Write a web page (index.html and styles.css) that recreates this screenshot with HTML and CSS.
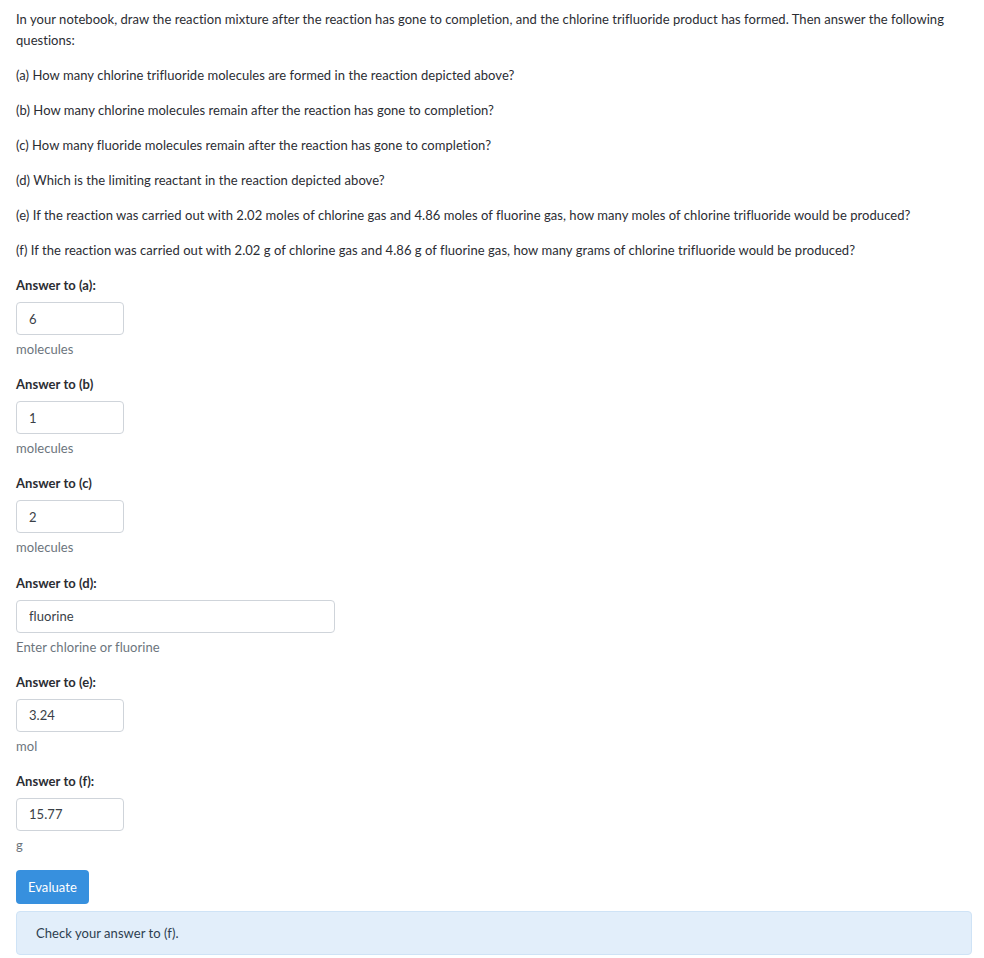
FILE: index.html
```html
<!DOCTYPE html>
<html lang="en">

<head>
    <meta charset="utf-8">
    <title>Limiting Reactant</title>
    <link rel="stylesheet" href="styles.css">
</head>

<body>
    <div class="problem">
        <p>In your notebook, draw the reaction mixture after the reaction has gone to completion, and the chlorine
            trifluoride product has formed. Then answer the following questions:</p>
        <p>(a) How many chlorine trifluoride molecules are formed in the reaction depicted above?</p>
        <p>(b) How many chlorine molecules remain after the reaction has gone to completion?</p>
        <p>(c) How many fluoride molecules remain after the reaction has gone to completion?</p>
        <p>(d) Which is the limiting reactant in the reaction depicted above?</p>
        <p>(e) If the reaction was carried out with 2.02 moles of chlorine gas and 4.86 moles of fluorine gas, how many
            moles of chlorine trifluoride would be produced?</p>
        <p>(f) If the reaction was carried out with 2.02 g of chlorine gas and 4.86 g of fluorine gas, how many grams of
            chlorine trifluoride would be produced?</p>

        <div class="form-group">
            <label class="answer-label">Answer to (a):</label>
            <input class="answer-input" type="text" value="6">
            <small class="form-text">molecules</small>
        </div>
        <div class="form-group">
            <label class="answer-label">Answer to (b)</label>
            <input class="answer-input" type="text" value="1">
            <small class="form-text">molecules</small>
        </div>
        <div class="form-group">
            <label class="answer-label">Answer to (c)</label>
            <input class="answer-input" type="text" value="2">
            <small class="form-text">molecules</small>
        </div>
        <div class="form-group">
            <label class="answer-label">Answer to (d):</label>
            <input class="answer-input wide" type="text" value="fluorine">
            <small class="form-text">Enter chlorine or fluorine</small>
        </div>
        <div class="form-group">
            <label class="answer-label">Answer to (e):</label>
            <input class="answer-input" type="text" value="3.24">
            <small class="form-text">mol</small>
        </div>
        <div class="form-group">
            <label class="answer-label">Answer to (f):</label>
            <input class="answer-input" type="text" value="15.77">
            <small class="form-text">g</small>
        </div>

        <button class="evaluate-btn" type="button">Evaluate</button>
        <div class="alert-info">Check your answer to (f).</div>
    </div>
</body>

</html>
```

FILE: styles.css
```css
body,
html {
    padding: 0;
    margin: 0;
    font-family: Lato, "Noto Sans", sans-serif;
    font-size: 13px;
    letter-spacing: 0.05px;
    color: #2b2d33;
    background: #fff;
}

.problem {
    padding: 9px 12px 0 16px;
    line-height: 21px;
}

p {
    margin: 0 0 14px 0;
}

.form-group {
    display: flex;
    flex-direction: column;
    align-items: flex-start;
    margin-bottom: 14.2px;
}

.answer-label {
    font-weight: 700;
    margin-bottom: 6px;
}

.answer-input {
    box-sizing: border-box;
    width: 108px;
    height: 33px;
    padding: 0 12px;
    border: 1px solid #cfd4da;
    border-radius: 4px;
    font-family: inherit;
    font-size: 13px;
    letter-spacing: 0.05px;
    color: #3a3f47;
    background: #fff;
}

.answer-input.wide {
    width: 319px;
}

.form-text {
    margin-top: 4px;
    font-size: 13px;
    color: #6c757d;
}

.evaluate-btn {
    display: block;
    height: 34px;
    padding: 0 12px;
    border: none;
    border-radius: 4px;
    background-color: #3790de;
    color: #fff;
    font-family: inherit;
    font-size: 13px;
    letter-spacing: 0.05px;
    cursor: pointer;
}

.alert-info {
    margin-top: 7px;
    padding: 10.5px 19px;
    border: 1px solid #cfe3f6;
    border-radius: 4px;
    background-color: #e2eefa;
    color: #2d3e50;
}
```
